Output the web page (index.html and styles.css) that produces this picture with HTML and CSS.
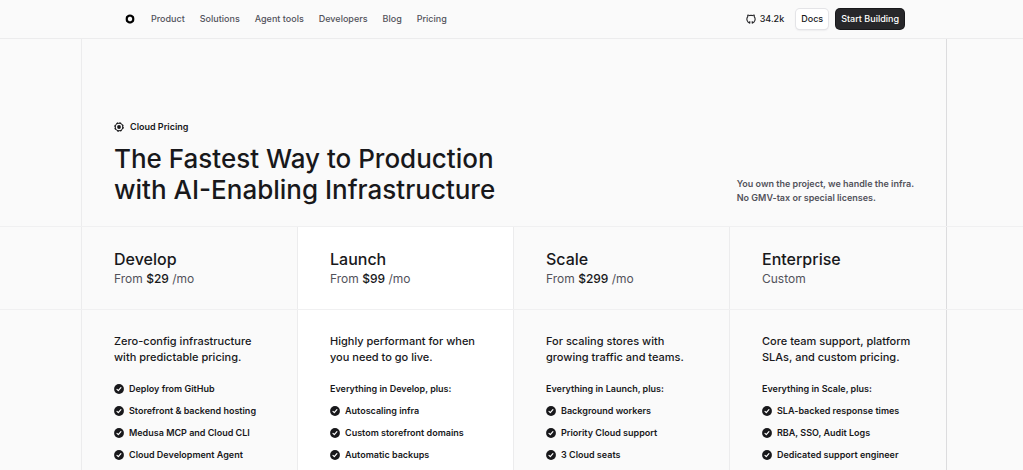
FILE: index.html
```html
<!DOCTYPE html>
<html lang="en">
<head>
    <meta charset="UTF-8">
    <meta name="viewport" content="width=device-width, initial-scale=1.0">
    <title>Cloud Pricing</title>
    <link rel="stylesheet" href="styles.css">
</head>
<body>
    <svg class="symbols" aria-hidden="true">
        <symbol id="check" viewBox="0 0 20 20">
            <circle cx="10" cy="10" r="9.8" fill="#18181b"/>
            <path d="M6 10.8l2.6 2.4 5.2-6" fill="none" stroke="#fff" stroke-width="2.4" stroke-linecap="round" stroke-linejoin="round"/>
        </symbol>
    </svg>

    <header class="topbar">
        <div class="topbar-inner">
            <a class="logo" href="#" aria-label="Home">
                <svg viewBox="0 0 20 20" width="10" height="10"><path d="M10 3q1 0 2 .6l2.600 1.500q1.800 1 1.800 3v3.800q0 2-1.800 3L12 16.400q-2 1.200-4 0l-2.600-1.500q-1.800-1-1.800-3V8.100q0-2 1.800-3L8 3.600q1-.6 2-.6z" fill="none" stroke="#000" stroke-width="4.400"/></svg>
            </a>
            <nav class="nav">
                <a href="#">Product</a>
                <a href="#">Solutions</a>
                <a href="#">Agent tools</a>
                <a href="#">Developers</a>
                <a href="#">Blog</a>
                <a href="#">Pricing</a>
            </nav>
            <div class="actions">
                <a class="stars" href="#">
                    <svg viewBox="0 0 20 20" width="10" height="10"><path d="M7.600 18.200A8.200 8.200 0 0 1 3.600 5.200C3.300 4 3.400 2.900 3.800 2c1.300.1 2.300.6 3.100 1.200a9.500 9.500 0 0 1 6.200 0c.8-.6 1.800-1.100 3.100-1.200.4.900.5 2 .2 3.200a8.200 8.200 0 0 1-4 13M7.600 18.200v-3M12.400 18.200v-3" fill="none" stroke="#27272a" stroke-width="2.200" stroke-linecap="round" stroke-linejoin="round"/></svg>
                    34.2k
                </a>
                <a class="button" href="#">Docs</a>
                <a class="button button-dark" href="#">Start Building</a>
            </div>
        </div>
    </header>

    <main>
        <section class="band hero">
            <div class="frame hero-inner">
                <div>
                    <p class="eyebrow">
                        <svg viewBox="0 0 20 20" width="10" height="10"><circle cx="10" cy="10" r="7.500" fill="none" stroke="#18181b" stroke-width="2.200"/><circle cx="10" cy="10" r="8.800" fill="none" stroke="#18181b" stroke-width="1.800" stroke-dasharray="3.900 3"/><circle cx="10" cy="10" r="3.800" fill="#18181b"/></svg>
                        Cloud Pricing
                    </p>
                    <h1>The Fastest Way to Production<br>with AI-Enabling Infrastructure</h1>
                </div>
                <p class="hero-note">You own the project, we handle the infra.<br>No GMV-tax or special licenses.</p>
            </div>
        </section>

        <section class="band">
            <div class="frame plans">
                <div class="plan-head">
                    <h2>Develop</h2>
                    <p>From <strong>$29</strong> /mo</p>
                </div>
                <div class="plan-head featured">
                    <h2>Launch</h2>
                    <p>From <strong>$99</strong> /mo</p>
                </div>
                <div class="plan-head">
                    <h2>Scale</h2>
                    <p>From <strong>$299</strong> /mo</p>
                </div>
                <div class="plan-head">
                    <h2>Enterprise</h2>
                    <p>Custom</p>
                </div>
            </div>
        </section>

        <section class="details">
            <div class="frame plans">
                <div class="plan-body">
                    <p class="summary">Zero-config infrastructure<br>with predictable pricing.</p>
                    <ul class="features">
                        <li><svg class="check"><use href="#check"/></svg>Deploy from GitHub</li>
                        <li><svg class="check"><use href="#check"/></svg>Storefront &amp; backend hosting</li>
                        <li><svg class="check"><use href="#check"/></svg>Medusa MCP and Cloud CLI</li>
                        <li><svg class="check"><use href="#check"/></svg>Cloud Development Agent</li>
                    </ul>
                </div>
                <div class="plan-body featured">
                    <p class="summary">Highly performant for when<br>you need to go live.</p>
                    <ul class="features">
                        <li>Everything in Develop, plus:</li>
                        <li><svg class="check"><use href="#check"/></svg>Autoscaling infra</li>
                        <li><svg class="check"><use href="#check"/></svg>Custom storefront domains</li>
                        <li><svg class="check"><use href="#check"/></svg>Automatic backups</li>
                    </ul>
                </div>
                <div class="plan-body">
                    <p class="summary">For scaling stores with<br>growing traffic and teams.</p>
                    <ul class="features">
                        <li>Everything in Launch, plus:</li>
                        <li><svg class="check"><use href="#check"/></svg>Background workers</li>
                        <li><svg class="check"><use href="#check"/></svg>Priority Cloud support</li>
                        <li><svg class="check"><use href="#check"/></svg>3 Cloud seats</li>
                    </ul>
                </div>
                <div class="plan-body">
                    <p class="summary">Core team support, platform<br>SLAs, and custom pricing.</p>
                    <ul class="features">
                        <li>Everything in Scale, plus:</li>
                        <li><svg class="check"><use href="#check"/></svg>SLA-backed response times</li>
                        <li><svg class="check"><use href="#check"/></svg>RBA, SSO, Audit Logs</li>
                        <li><svg class="check"><use href="#check"/></svg>Dedicated support engineer</li>
                    </ul>
                </div>
            </div>
        </section>
    </main>
</body>
</html>
```

FILE: styles.css
```css
* {
    box-sizing: border-box;
}
body {
    margin: 0;
    min-height: 100vh;
    display: flex;
    flex-direction: column;
    background-color: #fafafa;
    color: #18181b;
    font-family: Inter, sans-serif;
    font-size: 9px;
    font-weight: 600;
    line-height: 14px;
}
h1, h2, p, ul {
    margin: 0;
    padding: 0;
}
a {
    color: inherit;
    text-decoration: none;
}
svg {
    display: block;
    flex: none;
}
.symbols {
    position: absolute;
    width: 0;
    height: 0;
}
.topbar {
    border-bottom: 1px solid #ececed;
}
.topbar-inner {
    display: flex;
    align-items: center;
    height: 38px;
    margin: 0 119px 0 125px;
    font-weight: 500;
}
.nav {
    display: flex;
    gap: 15px;
    margin-left: 16px;
    color: #52525b;
}
.actions {
    display: flex;
    align-items: center;
    margin-left: auto;
    gap: 8px;
}
.stars {
    display: flex;
    align-items: center;
    gap: 4px;
    margin-right: 4px;
}
.button {
    padding: 3px 5px;
    border-radius: 4px;
    background-color: #fff;
    box-shadow: 0 0 0 1px #e4e4e7, 0 1px 2px #d4d4d8;
}
.button-dark {
    background-color: #27272a;
    box-shadow: 0 0 0 1px #18181b;
    color: #fff;
}
main {
    flex: 1;
    display: flex;
    flex-direction: column;
}
.band {
    border-bottom: 1px solid #f0f0f1;
}
.frame {
    margin: 0 76px 0 81px;
    border-left: 1px solid #ececed;
    border-right: 1px solid #dcdcde;
}
.hero-inner {
    display: flex;
    justify-content: space-between;
    align-items: flex-end;
    padding: 81px 32px 21px;
}
.eyebrow {
    display: flex;
    align-items: center;
    gap: 6px;
    margin-bottom: 9px;
}
h1 {
    font-size: 26px;
    font-weight: 500;
    line-height: 31px;
}
.hero-note {
    color: #52525b;
}
.plans {
    display: grid;
    grid-template-columns: repeat(4, 1fr);
}
.plan-head, .plan-body {
    padding-left: 32px;
    border-right: 1px solid #ececed;
}
.plan-head:last-child, .plan-body:last-child {
    border-right: none;
}
.plan-head {
    padding-top: 21px;
    padding-bottom: 21px;
}
.featured {
    background-color: #fff;
}
h2 {
    font-size: 16px;
    font-weight: 500;
    line-height: 22px;
}
.plan-head p {
    color: #52525b;
    font-size: 12px;
    font-weight: 400;
    line-height: 18px;
}
.plan-head strong {
    color: #18181b;
    font-weight: 500;
}
.details {
    flex: 1;
    display: flex;
}
.details .frame {
    flex: 1;
}
.plan-body {
    padding-top: 23px;
}
.summary {
    font-size: 11px;
    font-weight: 500;
    line-height: 16px;
}
.features {
    display: flex;
    flex-direction: column;
    gap: 8px;
    margin-top: 17px;
    list-style: none;
}
.features li {
    display: flex;
    align-items: center;
    gap: 5px;
}
.check {
    width: 10px;
    height: 10px;
}
```
